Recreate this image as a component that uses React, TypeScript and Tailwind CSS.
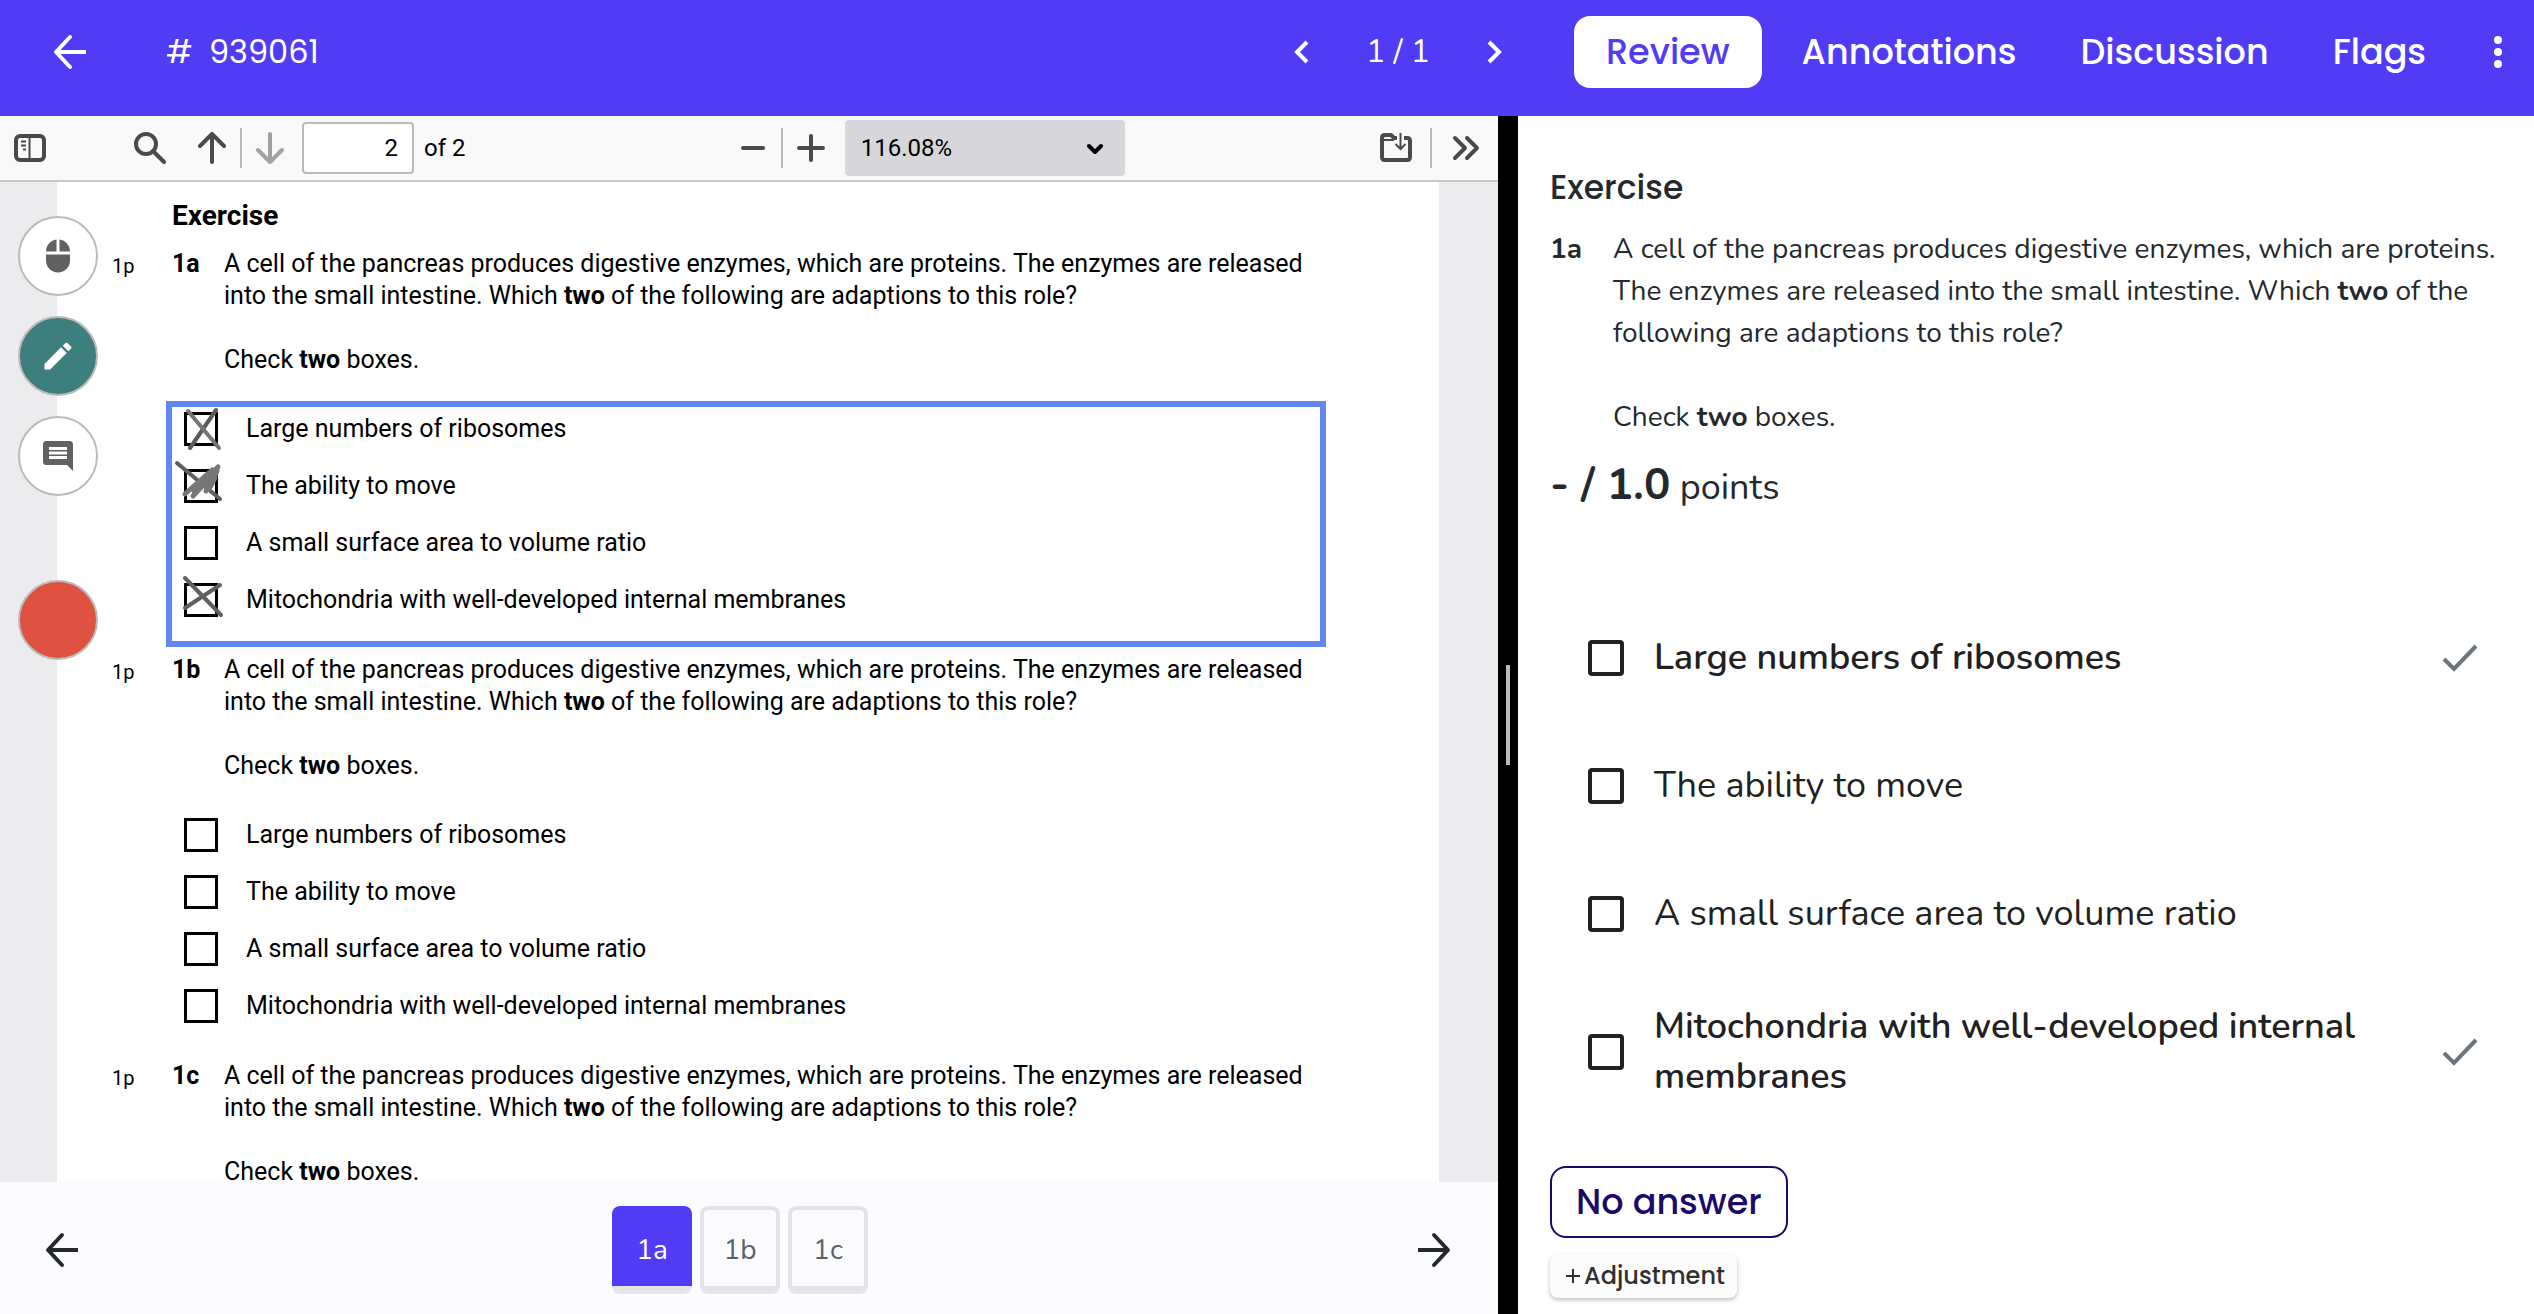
import type { ReactNode } from "react";
import { MdComment, MdModeEdit, MdMouse } from "react-icons/md";

const options = [
  { label: "Large numbers of ribosomes", correct: true },
  { label: "The ability to move", correct: false },
  { label: "A small surface area to volume ratio", correct: false },
  { label: "Mitochondria with well-developed internal membranes", correct: true },
];

// pen strokes per option, drawn on a 54x54 area around the 34px box
const penMarks = [
  <>
    <path d="M42 8 16 46" stroke="#5a5a5a" />
    <path d="M14 9 45 46" stroke="#757575" />
  </>,
  <>
    <path d="M3 4 46 40" stroke="#5f5f5f" />
    <path d="M11 35 38 11 20 32 44 8 19 37 43 11 32 32 41 19 35 30 43 12" stroke="#777" strokeWidth="5" />
  </>,
  null,
  <>
    <path d="M11 5 47 42" stroke="#5f5f5f" />
    <path d="M46 12 11 35" stroke="#5f5f5f" />
  </>,
];

const Arrow = ({ className }: { className?: string }) => (
  <svg viewBox="0 0 48 48" className={`size-12 ${className ?? ""}`} fill="none" stroke="currentColor" strokeWidth="4">
    <path d="M40 24H11" />
    <path d="M24 9 10 24 24 39" strokeLinejoin="round" strokeLinecap="round" />
  </svg>
);

const Chevron = ({ className }: { className?: string }) => (
  <svg viewBox="0 0 24 24" className={`size-6 ${className ?? ""}`} fill="none" stroke="currentColor" strokeWidth="4">
    <path d="M17 2 7 12 17 22" />
  </svg>
);

const Header = () => (
  <header className="grid h-[116px] shrink-0 grid-cols-[1518fr_1016fr] items-start bg-[#513cf5] pt-4 font-[Poppins,Inter,sans-serif] text-white">
    <div className="flex h-[72px] items-center pr-3 pl-[46px]">
      <button aria-label="Back">
        <Arrow />
      </button>
      <h1 className="ml-[72px] flex gap-4 text-[32px]">
        <span>#</span>
        <span>939061</span>
      </h1>
      <div className="ml-auto flex items-center gap-[52px] font-[Nunito,'Open_Sans',sans-serif] text-[32px]">
        <button aria-label="Previous">
          <Chevron />
        </button>
        <span>1 / 1</span>
        <button aria-label="Next">
          <Chevron className="rotate-180" />
        </button>
      </div>
    </div>
    <nav className="flex h-[72px] items-center pr-5 pl-14 text-[35px] font-medium">
      <button className="mr-2 h-full rounded-2xl bg-white px-8 text-[#513cf5]">Review</button>
      <button className="h-full px-8">Annotations</button>
      <button className="h-full px-8">Discussion</button>
      <button className="h-full px-8">Flags</button>
      <button aria-label="More" className="ml-auto">
        <svg viewBox="0 0 32 32" className="size-8" fill="currentColor">
          <circle cx="16" cy="4" r="4" />
          <circle cx="16" cy="16" r="4" />
          <circle cx="16" cy="28" r="4" />
        </svg>
      </button>
    </nav>
  </header>
);

const Separator = () => <span className="h-10 w-0.5 bg-[#b9b9ba]" />;

const Toolbar = () => (
  <div className="flex h-[66px] shrink-0 items-center border-b-2 border-[#c8c8c8] bg-[#f9f9fa] font-[Roboto,sans-serif] text-2xl text-[#4a4a4a]">
    <button aria-label="Toggle sidebar" className="ml-[14px]">
      <svg viewBox="0 0 32 32" className="size-8" fill="none" stroke="currentColor">
        <rect x="2" y="4" width="28" height="24" rx="4" strokeWidth="4" />
        <path d="M15.500 4V28" strokeWidth="2" />
        <path d="M7 9.500H12M7 13.500H12M9 17.500H12" strokeWidth="2" />
      </svg>
    </button>
    <button aria-label="Find" className="ml-[88px]">
      <svg viewBox="0 0 32 32" className="size-8" fill="none" stroke="currentColor" strokeWidth="4" strokeLinecap="round">
        <circle cx="12" cy="12" r="10" />
        <path d="M19 19 30 30" />
      </svg>
    </button>
    <button aria-label="Previous page" className="ml-[30px]">
      <svg viewBox="0 0 32 32" className="size-8" fill="none" stroke="currentColor" strokeWidth="4" strokeLinecap="round" strokeLinejoin="round">
        <path d="M16 30V3M4 14 16 2 28 14" />
      </svg>
    </button>
    <div className="mx-3 flex">
      <Separator />
    </div>
    <button aria-label="Next page" className="text-[#a1a1a2]">
      <svg viewBox="0 0 32 32" className="size-8" fill="none" stroke="currentColor" strokeWidth="4" strokeLinecap="round" strokeLinejoin="round">
        <path d="M16 2V29M4 18 16 30 28 18" />
      </svg>
    </button>
    <input
      aria-label="Page"
      defaultValue="2"
      className="ml-4 h-[52px] w-28 rounded border-2 border-[#bbbbbc] bg-white pr-[14px] text-right text-black"
    />
    <span className="ml-[10px] text-black">of 2</span>
    <div className="mx-auto flex items-center pl-4">
      <button aria-label="Zoom out">
        <svg viewBox="0 0 32 32" className="size-8" stroke="currentColor" strokeWidth="4" strokeLinecap="round">
          <path d="M6 16H26" />
        </svg>
      </button>
      <div className="mx-3 flex">
        <Separator />
      </div>
      <button aria-label="Zoom in">
        <svg viewBox="0 0 32 32" className="size-8" stroke="currentColor" strokeWidth="4" strokeLinecap="round">
          <path d="M4 16H28M16 4V28" />
        </svg>
      </button>
      <div className="relative ml-[18px] text-black">
        <select aria-label="Zoom" className="block h-14 w-[280px] appearance-none rounded bg-[#d7d6db] px-4">
          <option>116.08%</option>
        </select>
        <svg viewBox="0 0 16 12" className="pointer-events-none absolute top-[23px] right-[22px] h-3 w-4" fill="none" stroke="currentColor" strokeWidth="4" strokeLinecap="round" strokeLinejoin="round">
          <path d="M2 3 8 9 14 3" />
        </svg>
      </div>
    </div>
    <button aria-label="Save">
      <svg viewBox="0 0 32 32" className="size-8" fill="none" stroke="currentColor">
        <path d="M17 6H14L11 3H5Q2 3 2 6V25Q2 28 5 28H27Q30 28 30 25V9Q30 6 27 6H24" strokeWidth="4" />
        <path d="M2 8H13L16 6" strokeWidth="2" />
        <path d="M20.500 1V16M15.500 12 20.500 17 25.500 12" strokeWidth="2" />
      </svg>
    </button>
    <div className="mx-[18px] flex">
      <Separator />
    </div>
    <button aria-label="Tools" className="mr-4">
      <svg viewBox="0 0 32 32" className="size-8" fill="none" stroke="currentColor" strokeWidth="4" strokeLinecap="round" strokeLinejoin="round">
        <path d="M5 6 15 16 5 26M17 6 27 16 17 26" />
      </svg>
    </button>
  </div>
);

const PaperQuestion = ({ id }: { id: string }) => (
  <div className="flex">
    <span className="w-16 shrink-0 pl-1 text-xl leading-9">1p</span>
    <span className="w-[52px] shrink-0 font-bold">{id}</span>
    <div>
      <p>
        A cell of the pancreas produces digestive enzymes, which are proteins. The enzymes are released
        <br />
        into the small intestine. Which <b>two</b> of the following are adaptions to this role?
      </p>
      <p className="mt-8">
        Check <b>two</b> boxes.
      </p>
    </div>
  </div>
);

const PaperOptions = ({ active }: { active?: boolean }) => (
  <div
    className={`mt-[25px] mr-[113px] mb-[7px] ml-[58px] flex h-[246px] flex-col gap-[23px] border-[6px] pt-[5px] pl-3 ${active ? "border-[#6387f2]" : "border-transparent"}`}
  >
    {options.map((option, i) => (
      <label key={option.label} className="relative flex h-[34px] items-center gap-7">
        <input type="checkbox" className="size-[34px] appearance-none border-[3px] border-black" />
        {option.label}
        {active && (
          <svg
            viewBox="0 0 54 54"
            className="absolute -top-[10px] -left-[10px] size-[54px]"
            fill="none"
            strokeWidth="4"
            strokeLinejoin="round"
            strokeLinecap="round"
          >
            {penMarks[i]}
          </svg>
        )}
      </label>
    ))}
  </div>
);

const RoundButton = ({ label, className, children }: { label: string; className: string; children?: ReactNode }) => (
  <button
    aria-label={label}
    className={`flex size-20 items-center justify-center rounded-full border-2 border-[#bbb] text-4xl ${className}`}
  >
    {children}
  </button>
);

const Viewer = () => (
  <div className="relative min-h-0 flex-1 overflow-hidden bg-[#ececee] pr-[59px] pl-[57px]">
    <article className="h-full bg-white pt-[18px] pl-[51px] font-[Roboto,sans-serif] text-[25px] leading-8 whitespace-nowrap text-black">
      <h2 className="mb-4 ml-16 text-[28px] leading-8 font-bold">Exercise</h2>
      <PaperQuestion id="1a" />
      <PaperOptions active />
      <PaperQuestion id="1b" />
      <PaperOptions />
      <PaperQuestion id="1c" />
    </article>
    <div className="absolute top-[34px] left-[18px] flex flex-col gap-5">
      <RoundButton label="Pointer" className="bg-white text-[#616161]">
        <MdMouse />
      </RoundButton>
      <RoundButton label="Pen" className="bg-[#3d7f7d] text-white">
        <MdModeEdit />
      </RoundButton>
      <RoundButton label="Comment" className="bg-white text-[#616161]">
        <MdComment />
      </RoundButton>
      <RoundButton label="Colour" className="mt-16 bg-[#df5141]" />
    </div>
  </div>
);

const QuestionBar = () => (
  <footer className="flex h-[132px] shrink-0 items-start justify-between bg-[#fcfcff] pt-6 pr-10 pl-[38px] text-[#24292e]">
    <button aria-label="Previous question" className="mt-5">
      <Arrow />
    </button>
    <div className="mr-4 flex gap-2 font-[Nunito,'Open_Sans',sans-serif] text-[28px]">
      <button className="h-[88px] w-20 rounded-lg border-b-8 border-[#e2e4e7] bg-[#513cf5] pt-2 text-white">1a</button>
      <button className="h-[88px] w-20 rounded-lg border-4 border-b-8 border-[#e2e4e7] pt-1 text-[#59626b]">1b</button>
      <button className="h-[88px] w-20 rounded-lg border-4 border-b-8 border-[#e2e4e7] pt-1 text-[#59626b]">1c</button>
    </div>
    <button aria-label="Next question" className="mt-5">
      <Arrow className="rotate-180" />
    </button>
  </footer>
);

const ReviewPanel = () => (
  <aside className="overflow-hidden bg-white px-8 font-[Nunito,'Open_Sans',sans-serif] text-[#24292e]">
    <h2 className="mt-[52px] font-[Poppins,Inter,sans-serif] text-[33px] leading-10 font-medium">Exercise</h2>
    <div className="mt-5 flex text-[28px] leading-[42px] whitespace-nowrap">
      <span className="w-[63px] shrink-0 font-bold">1a</span>
      <div>
        <p>
          A cell of the pancreas produces digestive enzymes, which are proteins.
          <br />
          The enzymes are released into the small intestine. Which <b>two</b> of the
          <br />
          following are adaptions to this role?
        </p>
        <p className="mt-[42px]">
          Check <b>two</b> boxes.
        </p>
      </div>
    </div>
    <p className="mt-[19px] text-4xl leading-[56px]">
      <span className="text-[44px] leading-[56px] font-bold">- / 1.0</span> points
    </p>
    <ul className="mt-[78px] pl-[38px] text-4xl leading-[50px] text-[#212121]">
      {options.map((option) => (
        <li key={option.label} className="flex min-h-32 items-center py-6 leading-[50px]">
          <label className={`flex flex-1 items-center gap-[30px] ${option.correct ? "font-semibold" : ""}`}>
            <input type="checkbox" className="size-9 shrink-0 appearance-none rounded border-4 border-[#212121]" />
            <span className="max-w-[740px]">{option.label}</span>
          </label>
          {option.correct && (
            <svg viewBox="0 0 36 28" className="mr-6 h-7 w-9" fill="none" stroke="#6c757d" strokeWidth="4">
              <path d="M2 15 12 25 34 2" />
            </svg>
          )}
        </li>
      ))}
    </ul>
    <div className="mt-10 flex flex-col items-start gap-4 font-[Poppins,Inter,sans-serif] font-medium">
      <button className="h-[72px] rounded-2xl border-2 border-[#1b0a6b] px-6 text-[35px] text-[#1b0a6b]">No answer</button>
      <button className="flex h-11 items-center gap-1 rounded-lg bg-[#fcfcfc] pr-3 pl-4 text-2xl text-[#303030] shadow-[0_2px_4px_rgba(0,0,0,0.25)]">
        <svg viewBox="0 0 14 14" className="size-[14px]" stroke="currentColor" strokeWidth="2">
          <path d="M0 7H14M7 0V14" />
        </svg>
        Adjustment
      </button>
    </div>
  </aside>
);

export default function App() {
  return (
    <div className="flex h-screen flex-col overflow-hidden">
      <Header />
      <main className="grid min-h-0 flex-1 grid-cols-[1498fr_20px_1016fr]">
        <div className="flex min-h-0 min-w-0 flex-col">
          <Toolbar />
          <Viewer />
          <QuestionBar />
        </div>
        <div className="flex items-center justify-center bg-black">
          <span className="h-[100px] w-1 bg-[#bbb]" />
        </div>
        <ReviewPanel />
      </main>
    </div>
  );
}
